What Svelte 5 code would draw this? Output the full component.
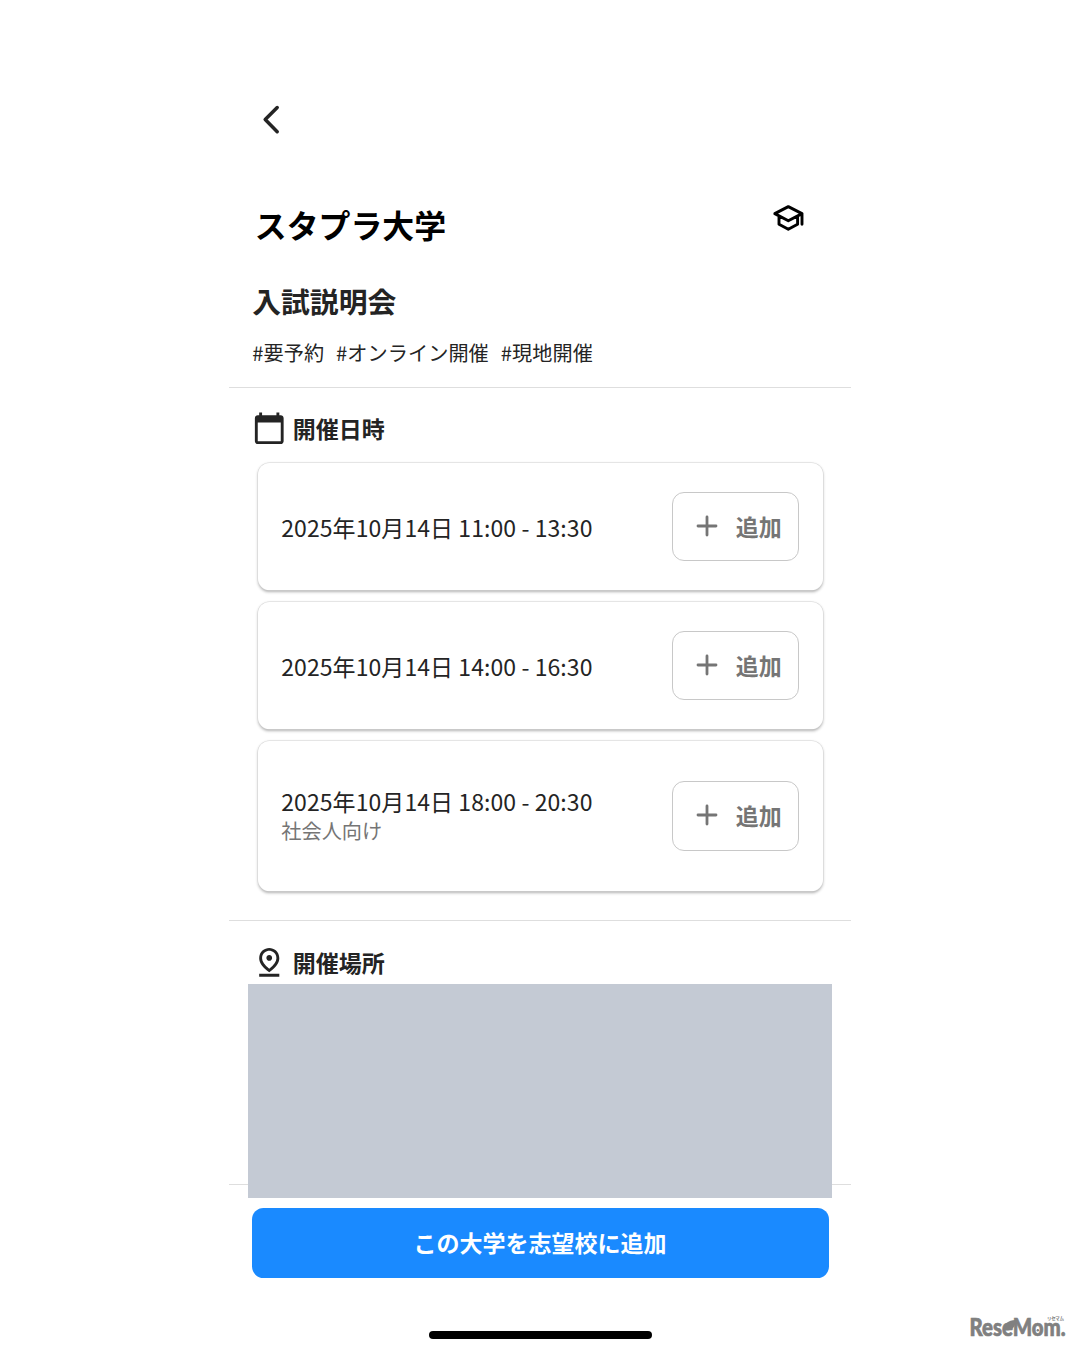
<script lang="ts">
  type Slot = { date: string; note?: string };

  const university = "スタプラ大学";
  const eventName = "入試説明会";
  const tags = ["#要予約", "#オンライン開催", "#現地開催"];
  const slots: Slot[] = [
    { date: "2025年10月14日 11:00 - 13:30" },
    { date: "2025年10月14日 14:00 - 16:30" },
    { date: "2025年10月14日 18:00 - 20:30", note: "社会人向け" }
  ];
</script>

<div class="page">
  <main class="screen">
    <nav>
      <button class="back" aria-label="戻る">
        <svg width="20" height="32" viewBox="0 0 20 32">
          <path d="M16.2 3.5L4.2 15.6L16.2 27.7" />
        </svg>
      </button>
    </nav>

    <header>
      <h1>{university}</h1>
      <svg class="cap" width="34" height="34" viewBox="0 0 34 34">
        <path d="M3.8 12.6L17.3 5.6L31 12.6L17.3 19.8ZM8 15V23.2L17.3 28.2L26.6 23.2V15M31 12.6V23.2" />
      </svg>
    </header>

    <section class="summary">
      <h2>{eventName}</h2>
      <div class="tags">
        {#each tags as tag}
          <span>{tag}</span>
        {/each}
      </div>
    </section>

    <section class="dates">
      <div class="section-title">
        <svg viewBox="0 0 24 24">
          <path d="M20 3h-1V1h-2v2H7V1H5v2H4c-1.1 0-2 .9-2 2v16c0 1.1.9 2 2 2h16c1.1 0 2-.9 2-2V5c0-1.1-.9-2-2-2zm0 18H4V8h16v13z" />
        </svg>
        <h3>開催日時</h3>
      </div>
      <div class="cards">
        {#each slots as slot}
          <div class="card" class:tall={slot.note}>
            <div class="when">
              <p>{slot.date}</p>
              {#if slot.note}
                <p class="note">{slot.note}</p>
              {/if}
            </div>
            <button class="add">
              <svg width="22" height="22" viewBox="0 0 22 22">
                <path d="M11 2V20M2 11H20" />
              </svg>
              <span>追加</span>
            </button>
          </div>
        {/each}
      </div>
    </section>

    <section class="place">
      <div class="section-title">
        <svg viewBox="0 0 24 24">
          <path d="M12 4c1.93 0 5 1.4 5 5.15 0 2.16-1.72 4.67-5 7.32-3.28-2.65-5-5.17-5-7.32C7 5.4 10.07 4 12 4m0-2C8.73 2 5 4.46 5 9.15c0 3.12 2.33 6.41 7 9.85 4.67-3.44 7-6.73 7-9.85C19 4.46 15.27 2 12 2zm0 5c-1.1 0-2 .9-2 2s.9 2 2 2 2-.9 2-2-.9-2-2-2zM5 20h14v2H5v-2z" />
        </svg>
        <h3>開催場所</h3>
      </div>
      <div class="map"></div>
    </section>

    <footer>
      <button class="cta">この大学を志望校に追加</button>
      <div class="home-bar"></div>
    </footer>
  </main>

  <svg class="brand" width="104" height="40" viewBox="0 0 104 40">
    <text class="ruby" x="81" y="10.2" textLength="17">リセマム</text>
    <text class="name" x="3.5" y="26" textLength="96" lengthAdjust="spacingAndGlyphs">ReseMom.</text>
    <path d="M38.500 20C37.500 13.500 42 10.500 49.500 10C50 15.500 47 20 41 20.500Z" />
    <circle cx="71.800" cy="20.200" r="1.200" />
  </svg>
</div>

<style>
  :global(body) {
    background: #fff;
  }

  .page {
    position: relative;
    width: 1080px;
    height: 1350px;
    overflow: hidden;
    background: #fff;
    color: #242424;
    font-family: "Noto Sans CJK JP", sans-serif;
  }

  .screen {
    display: flex;
    flex-direction: column;
    width: 622.5px;
    height: 1350px;
    margin: 0 auto;
  }

  h1, h2, h3, p {
    margin: 0;
  }

  button {
    margin: 0;
    padding: 0;
    border: 0;
    background: none;
    font-family: inherit;
    color: inherit;
  }

  nav {
    height: 96px;
    padding: 104px 0 0 32px;
  }

  .back {
    display: block;
    height: 32px;
  }

  .back svg {
    display: block;
    fill: none;
    stroke: #242424;
    stroke-width: 3.5;
    stroke-linecap: round;
    stroke-linejoin: round;
  }

  header {
    display: flex;
    justify-content: space-between;
    height: 84px;
    padding: 0 46px 0 26px;
  }

  h1 {
    font-size: 31.9px;
    line-height: 48px;
    font-weight: 700;
    color: #000;
  }

  .cap {
    margin-top: 1px;
    fill: none;
    stroke: #000;
    stroke-width: 2.9;
    stroke-linejoin: round;
    stroke-linecap: round;
  }

  .summary {
    height: 102.5px;
    padding-left: 23.5px;
    border-bottom: 1.4px solid #dedede;
  }

  h2 {
    font-size: 28.8px;
    line-height: 34px;
    font-weight: 700;
  }

  .tags {
    display: flex;
    gap: 12px;
    margin-top: 20px;
    font-size: 20.16px;
    line-height: 30px;
    letter-spacing: 0.05px;
  }

  .dates {
    box-sizing: border-box;
    height: 533.5px;
    padding: 23px 28.5px 0 23px;
    border-bottom: 1.4px solid #dedede;
  }

  .section-title {
    display: flex;
    align-items: center;
    gap: 6.5px;
    height: 34.5px;
  }

  .section-title svg {
    width: 34.5px;
    height: 34.5px;
    fill: #242424;
  }

  h3 {
    font-size: 23px;
    line-height: 34px;
    font-weight: 700;
  }

  .cards {
    display: flex;
    flex-direction: column;
    gap: 12.2px;
    margin: 18px 0 0 6.5px;
  }

  .card {
    box-sizing: border-box;
    display: flex;
    align-items: center;
    justify-content: space-between;
    height: 127px;
    padding: 0 23.5px 0 23px;
    border-radius: 11.5px;
    background: #fff;
    box-shadow: 0 0 0 0.5px #d6d6d6, 0 1.5px 3px rgba(0, 0, 0, 0.3);
  }

  .card.tall {
    height: 149.5px;
  }

  .when {
    padding-top: 1.5px;
    font-size: 23px;
    line-height: 29.2px;
    letter-spacing: 0.07px;
  }

  .tall .when {
    padding-top: 0;
  }

  .note {
    font-size: 20.2px;
    letter-spacing: 0;
    color: #757575;
  }

  .add {
    box-sizing: border-box;
    display: flex;
    align-items: center;
    gap: 18px;
    width: 127.5px;
    height: 69.5px;
    padding: 0 0 1.5px 23px;
    border: 1.4px solid #c8c8c8;
    border-radius: 12px;
    font-size: 23px;
    font-weight: 700;
    line-height: 34px;
    color: #757575;
  }

  .add svg {
    fill: none;
    stroke: #757575;
    stroke-width: 2.8;
    stroke-linecap: round;
  }

  .place {
    box-sizing: border-box;
    height: 264px;
    padding: 23.5px 19px 0 23px;
    border-bottom: 1.4px solid #dedede;
  }

  .place h3 {
    padding-top: 1px;
  }

  /* the map panel runs past the section's bottom rule */
  .map {
    position: relative;
    height: 214px;
    margin: 5px 0 0 -4px;
    background: #c4cad4;
  }

  footer {
    display: flex;
    flex-direction: column;
    align-items: center;
    padding-top: 23px;
  }

  .cta {
    width: 577px;
    height: 69.5px;
    padding-bottom: 2px;
    border-radius: 11.5px;
    background: #1a8aff;
    color: #fff;
    font-size: 23px;
    font-weight: 700;
  }

  .home-bar {
    width: 223px;
    height: 7.5px;
    margin-top: 53.5px;
    border-radius: 4px;
    background: #000;
  }

  /* publisher mark in the corner of the page */
  .brand {
    position: absolute;
    right: 10px;
    bottom: 0;
    fill: #808080;
  }

  .brand .name {
    font-family: Lato, sans-serif;
    font-size: 24px;
    font-weight: 900;
    stroke: #808080;
    stroke-width: 0.7;
  }

  .brand .ruby {
    font-size: 4.5px;
    font-weight: 700;
  }
</style>
